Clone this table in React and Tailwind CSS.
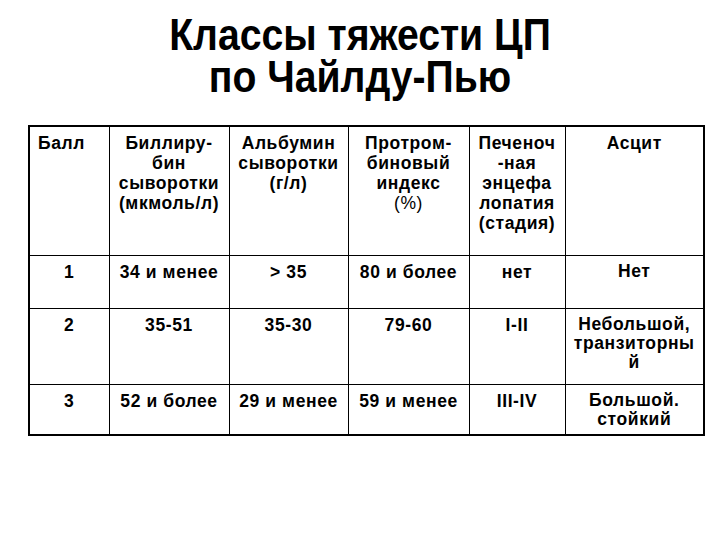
import React from 'react';

const cell = 'border border-black align-top text-center px-1';

const rows = [
  { ball: '1', bil: '34 и менее', alb: '> 35', pti: '80 и более', enc: 'нет', asc: 'Нет', h: 'h-[53px]' },
  { ball: '2', bil: '35-51', alb: '35-30', pti: '79-60', enc: 'I-II', asc: <>Небольшой,<br />транзиторны<br />й</>, h: 'h-[76px]' },
  { ball: '3', bil: '52 и более', alb: '29 и менее', pti: '59 и менее', enc: 'III-IV', asc: <>Большой.<br />стойкий</>, h: 'h-[51px]' },
];

export default function App() {
  return (
    <div className="w-[720px] h-[540px] bg-white text-black" style={{ fontFamily: '"Liberation Sans", Arial, sans-serif' }}>
      {/* Title */}
      <h1 className="pt-[14px] text-center scale-x-[0.89] text-[44px] leading-[42px] font-bold">
        Классы тяжести ЦП
        <br />
        по Чайлду-Пью
      </h1>

      {/* Table */}
      <div className="mt-[27px] pl-[28px]">
        <table className="w-[675px] border-collapse border-2 border-black table-fixed font-bold text-[17.5px] leading-[20px] tracking-[0.6px]">
          <colgroup>
            <col className="w-[80px]" />
            <col className="w-[120px]" />
            <col className="w-[119px]" />
            <col className="w-[121px]" />
            <col className="w-[96px]" />
            <col className="w-[139px]" />
          </colgroup>
          <tbody>
            <tr className="h-[129px]">
              <td className="border border-black align-top text-left pl-[8px] pt-[6px]">Балл</td>
              <td className={cell + ' pt-[6px]'}>Биллиру-<br />бин<br />сыворотки<br />(мкмоль/л)</td>
              <td className={cell + ' pt-[6px]'}>Альбумин<br />сыворотки<br />(г/л)</td>
              <td className={cell + ' pt-[6px]'}>
                Протром-<br />биновый<br />индекс<br /><span className="font-normal">(%)</span>
              </td>
              <td className={cell + ' pt-[6px]'}>Печеноч<br />-ная<br />энцефа<br />лопатия<br />(стадия)</td>
              <td className={cell + ' pt-[6px]'}>Асцит</td>
            </tr>
            {rows.map((r) => (
              <tr key={r.ball} className={r.h}>
                <td className={cell + ' pt-[6px]'}>{r.ball}</td>
                <td className={cell + ' pt-[6px]'}>{r.bil}</td>
                <td className={cell + ' pt-[6px]'}>{r.alb}</td>
                <td className={cell + ' pt-[6px]'}>{r.pti}</td>
                <td className={cell + ' pt-[6px]'}>{r.enc}</td>
                <td className={cell + ' pt-[6px] leading-[19px]'}>{r.asc}</td>
              </tr>
            ))}
          </tbody>
        </table>
      </div>
    </div>
  );
}
